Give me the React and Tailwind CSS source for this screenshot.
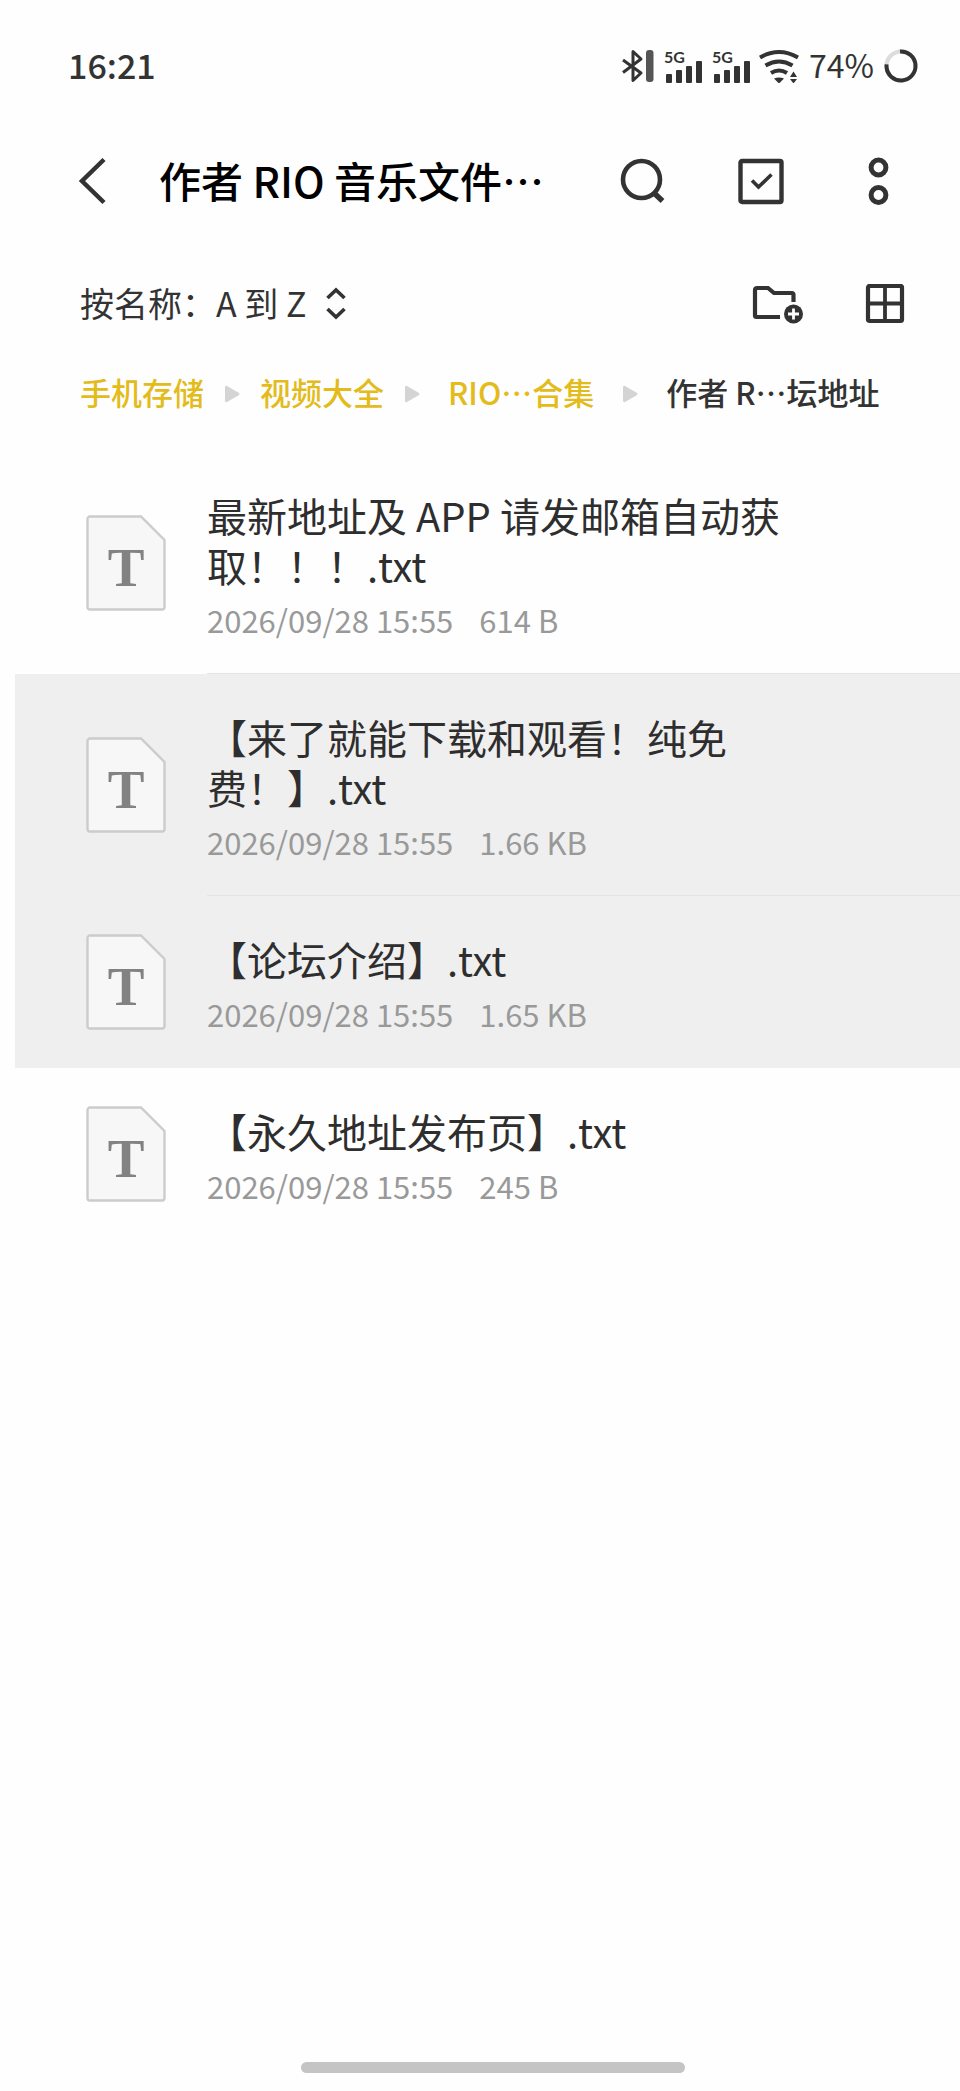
const files = [
  { id: 1, name: '最新地址及 APP 请发邮箱自动获取！！！.txt', date: '2026/09/28 15:55', size: '614 B', selected: false, divider: true },
  { id: 2, name: '【来了就能下载和观看！纯免费！】.txt', date: '2026/09/28 15:55', size: '1.66 KB', selected: true, divider: true },
  { id: 3, name: '【论坛介绍】.txt', date: '2026/09/28 15:55', size: '1.65 KB', selected: true, divider: false },
  { id: 4, name: '【永久地址发布页】.txt', date: '2026/09/28 15:55', size: '245 B', selected: false, divider: false },
]

// Long folder names are shortened in the middle: head + …tail
const crumbs = [
  { head: '手机存储' },
  { head: '视频大全' },
  { head: 'RIO', tail: '…合集' },
  { head: '作者 R', tail: '…坛地址' },
]

function BluetoothIcon() {
  return (
    <svg width="34" height="34" viewBox="0 0 34 34" fill="none">
      <path d="M2 11l18 13-8 7.500V2.500L20 10 2 23.500" stroke="#333" strokeWidth="3" strokeLinejoin="round" />
      <rect x="25" y="1" width="7.500" height="32" rx="3" fill="#555" />
    </svg>
  )
}

function SignalIcon() {
  return (
    <svg className="overflow-visible" width="38" height="34" viewBox="0 0 38 34" fill="#333">
      <text x="0" y="14" fontSize="16" fontWeight="700" fontFamily="Lato, sans-serif">5G</text>
      <rect x="2" y="25" width="6" height="9" rx="1" />
      <rect x="12" y="21" width="6" height="13" rx="1" />
      <rect x="22" y="17" width="6" height="17" rx="1" />
      <rect x="32" y="12" width="6" height="22" rx="1" />
    </svg>
  )
}

function WifiIcon() {
  return (
    <svg width="40" height="34" viewBox="0 0 40 34" fill="none">
      <path d="M1 8.500Q20-2.500 39 8.500M6.500 16.500q13.500-8 27 0M12 24q8-5 16 0" stroke="#333" strokeWidth="4" />
      <path d="M15 29.500q5-2 10 0L20 34.500zM31 28l3.500-5.500L38 28zM31 30h7l-3.500 4.500z" fill="#333" />
    </svg>
  )
}

function BatteryRing() {
  return (
    <svg width="34" height="34" viewBox="0 0 34 34" fill="none" strokeWidth="4">
      <circle cx="17" cy="17" r="14.500" stroke="#dcdcdc" />
      <circle cx="17" cy="17" r="14.500" stroke="#333" pathLength="100" strokeDasharray="78 22" transform="rotate(-94 17 17)" />
    </svg>
  )
}

function StatusBar() {
  return (
    <div className="mt-[42px] flex h-12 items-center pl-[68px] pr-[42px] text-[#333]">
      <span className="pb-1 text-[34px] font-medium">16:21</span>
      <div className="ml-auto flex items-center">
        <BluetoothIcon />
        <div className="ml-[9px] flex gap-2.5">
          <SignalIcon />
          <SignalIcon />
        </div>
        <div className="ml-[9px]">
          <WifiIcon />
        </div>
        <span className="ml-2.5 mr-2.5 pb-1 text-[32px]">74%</span>
        <BatteryRing />
      </div>
    </div>
  )
}

function Header() {
  return (
    <header className="mt-[43px] flex h-24 items-center pl-[78px] pr-[55px] text-[#333]">
      <button aria-label="返回">
        <svg width="28" height="48" viewBox="0 0 28 48" fill="none" stroke="currentColor" strokeWidth="4.500">
          <path d="M26 2.500L4 24l22 21.500" />
        </svg>
      </button>
      <h1 className="ml-[53px] whitespace-nowrap pb-1 text-[42px] font-medium text-black">作者 RIO 音乐文件…</h1>
      <div className="ml-auto flex gap-[71px]">
        <button aria-label="搜索">
          <svg width="48" height="48" viewBox="0 0 48 48" fill="none" stroke="currentColor">
            <circle cx="22.500" cy="22.500" r="18.500" strokeWidth="4.600" />
            <path d="M34.500 35.500l9 8.500" strokeWidth="5.500" />
          </svg>
        </button>
        <button aria-label="全选">
          <svg width="48" height="48" viewBox="0 0 48 48" fill="none" stroke="currentColor">
            <rect x="2.500" y="4" width="41" height="41" rx="1.500" strokeWidth="4.400" />
            <path d="M14 23.500l6.500 6.500L33.500 17.500" strokeWidth="3.600" />
          </svg>
        </button>
        <button aria-label="更多">
          <svg width="48" height="48" viewBox="0 0 48 48" fill="none" stroke="currentColor" strokeWidth="5">
            <circle cx="21.500" cy="10.500" r="7.400" />
            <circle cx="21.500" cy="38" r="7.400" />
          </svg>
        </button>
      </div>
    </header>
  )
}

function SortBar() {
  return (
    <div className="mt-[47px] flex h-14 items-center pl-20 pr-[55px] text-[#333]">
      <button className="flex items-center gap-5 text-[34px]">
        <span className="pb-1">按名称：A 到 Z</span>
        <svg width="20" height="34" viewBox="0 0 20 34" fill="none" stroke="currentColor" strokeWidth="3.600">
          <path d="M1.500 11L10 3l8.500 8M1.500 22l8.500 8 8.500-8" />
        </svg>
      </button>
      <div className="ml-auto flex gap-[61px]">
        <button aria-label="新建文件夹">
          <svg width="52" height="40" viewBox="0 0 52 40" fill="none">
            <path d="M41.500 18V10.500a1.500 1.500 0 0 0-1.500-1.500H22l-6-5H5a2 2 0 0 0-2 2v25.500a1.500 1.500 0 0 0 1.500 1.500H28" stroke="#333" strokeWidth="4.200" />
            <circle cx="41.500" cy="30" r="9.500" fill="#333" />
            <path d="M36 30h11M41.500 24.500v11" stroke="#fff" strokeWidth="2.800" />
          </svg>
        </button>
        <button aria-label="网格视图">
          <svg width="40" height="40" viewBox="0 0 40 40" fill="none" stroke="currentColor">
            <rect x="3" y="2" width="34" height="35" rx="1.500" strokeWidth="4.200" />
            <path d="M3 19.500h34M20 2v35" strokeWidth="3.800" />
          </svg>
        </button>
      </div>
    </div>
  )
}

function Breadcrumbs() {
  return (
    <nav className="mt-[42px] flex h-10 items-center whitespace-nowrap pl-20 text-[31px] font-medium">
      {crumbs.map((crumb, i) => {
        const last = i === crumbs.length - 1
        return (
          <div key={crumb.head} className="flex items-center">
            <a
              href="#"
              className={`flex pb-1 ${last ? 'text-[#333]' : 'text-[#e3bb1a]'} ${crumb.tail ? 'px-2' : ''}`}
            >
              <span>{crumb.head}</span>
              {crumb.tail && <span>{crumb.tail}</span>}
            </a>
            {!last && (
              <svg className="mx-5" width="16" height="18" viewBox="0 0 16 18" fill="#d4d4d4">
                <path d="M1 2a1.500 1.500 0 0 1 2-1l12 7q1 1 0 2L3 17a1.500 1.500 0 0 1-2-1z" />
              </svg>
            )}
          </div>
        )
      })}
    </nav>
  )
}

function TextFileIcon() {
  return (
    <svg className="shrink-0" width="80" height="96" viewBox="0 0 80 96">
      <path
        d="M4 1.500h51L78.500 25v67a2.500 2.500 0 0 1-2.500 2.500H4a2.500 2.500 0 0 1-2.500-2.500V4A2.500 2.500 0 0 1 4 1.500z"
        fill="#f7f7f7"
        stroke="#ccc"
        strokeWidth="2.400"
      />
      <text x="40" y="71" textAnchor="middle" fontSize="55" fontWeight="700" fontFamily="'Liberation Serif', serif" fill="#828282">
        T
      </text>
    </svg>
  )
}

function FileRow({ file }) {
  return (
    <li>
      <a href="#" className={`ml-[15px] flex pl-[71px] ${file.selected ? 'bg-[#efefef]' : ''}`}>
        <div className="flex items-center">
          <TextFileIcon />
        </div>
        <div className={`ml-[41px] grow border-b pb-[33px] pr-40 pt-[38px] ${file.divider ? 'border-[#e4e4e4]' : 'border-transparent'}`}>
          <p className="text-[40px] leading-[50px] text-[#2e2e2e]">{file.name}</p>
          <p className="mt-2.5 flex gap-[26px] text-[31px] leading-10 text-[#999]">
            <span>{file.date}</span>
            <span>{file.size}</span>
          </p>
        </div>
      </a>
    </li>
  )
}

export default function App() {
  return (
    <div className="flex min-h-screen flex-col overflow-hidden bg-[#fefefe] font-['Noto_Sans_CJK_SC',sans-serif]">
      <StatusBar />
      <Header />
      <SortBar />
      <Breadcrumbs />
      <ul className="mt-[38px]">
        {files.map((file) => (
          <FileRow key={file.id} file={file} />
        ))}
      </ul>
      <div className="mb-[18px] mt-auto flex justify-center pl-[26px]">
        <div className="h-[11px] w-96 rounded-full bg-[#c4c4c4]" />
      </div>
    </div>
  )
}
